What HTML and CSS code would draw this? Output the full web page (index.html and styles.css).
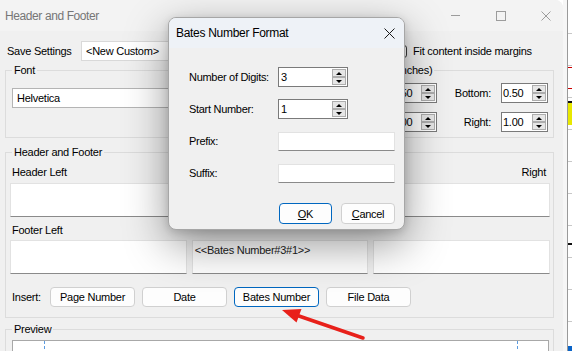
FILE: index.html
```html
<!DOCTYPE html>
<html lang="en">

<head>
    <meta charset="UTF-8">
    <title>Header and Footer</title>
    <link rel="stylesheet" href="styles.css">
</head>

<body>
    <div class="screen">
        <div class="hf-window">
            <div class="titlebar">
                <span class="title">Header and Footer</span>
                <div class="caption">
                    <svg width="10" height="10" viewBox="0 0 10 10"><path d="M0 4.5h9" stroke="#9c9c9c" fill="none"/></svg>
                    <svg width="10" height="10" viewBox="0 0 10 10"><rect x="0.5" y="0.5" width="9" height="9" stroke="#9c9c9c" fill="none"/></svg>
                    <svg width="10" height="10" viewBox="0 0 10 10"><path d="M0.5 0.5l9 9M9.5 0.5l-9 9" stroke="#9c9c9c" fill="none"/></svg>
                </div>
            </div>

            <div class="client">
                <div class="settings-row">
                    <span class="settings-label">Save Settings</span>
                    <div class="combo">&lt;New Custom&gt;</div>
                    <label class="fit-check"><span class="checkbox"></span>Fit content inside margins</label>
                </div>

                <div class="top-groups">
                    <fieldset class="group font-group">
                        <legend>Font</legend>
                        <div class="font-field">Helvetica</div>
                    </fieldset>
                    <fieldset class="group margins-group">
                        <legend>Margins (inches)</legend>
                        <div class="margins-grid">
                            <span class="m-label">Top:</span>
                            <div class="spin"><span class="val">0.50</span><span class="spinner"><b class="up"></b><b class="down"></b></span></div>
                            <span class="m-label wide">Bottom:</span>
                            <div class="spin"><span class="val">0.50</span><span class="spinner"><b class="up"></b><b class="down"></b></span></div>
                            <span class="m-label">Left:</span>
                            <div class="spin"><span class="val">1.00</span><span class="spinner"><b class="up"></b><b class="down"></b></span></div>
                            <span class="m-label wide">Right:</span>
                            <div class="spin"><span class="val">1.00</span><span class="spinner"><b class="up"></b><b class="down"></b></span></div>
                        </div>
                    </fieldset>
                </div>

                <fieldset class="group hf-group">
                    <legend>Header and Footer</legend>
                    <div class="hf-labels">
                        <span>Header Left</span>
                        <span class="center">Center</span>
                        <span class="right">Right</span>
                    </div>
                    <div class="hf-boxes">
                        <div class="hf-box"></div>
                        <div class="hf-box"></div>
                        <div class="hf-box"></div>
                    </div>
                    <div class="hf-labels footer-labels">
                        <span>Footer Left</span>
                    </div>
                    <div class="hf-boxes footer-boxes">
                        <div class="hf-box"></div>
                        <div class="hf-box">&lt;&lt;Bates Number#3#1&gt;&gt;</div>
                        <div class="hf-box"></div>
                    </div>
                    <div class="insert-row">
                        <span class="insert-label">Insert:</span>
                        <button class="btn insert-btn">Page Number</button>
                        <button class="btn insert-btn">Date</button>
                        <button class="btn insert-btn focused">Bates Number</button>
                        <button class="btn insert-btn">File Data</button>
                    </div>
                </fieldset>

                <fieldset class="group preview-group">
                    <legend>Preview</legend>
                    <div class="preview-page">
                        <div class="preview-margins"></div>
                    </div>
                </fieldset>
            </div>
        </div>

        <div class="doc-strip"></div>

        <div class="dialog">
            <div class="dialog-title">
                <span>Bates Number Format</span>
                <svg width="11" height="11" viewBox="0 0 11 11"><path d="M0.5 0.5l10 10M10.5 0.5l-10 10" stroke="#1a1a1a" fill="none"/></svg>
            </div>
            <div class="dialog-body">
                <div class="dialog-grid">
                    <span>Number of Digits:</span>
                    <div class="spin digits"><span class="val">3</span><span class="spinner"><b class="up"></b><b class="down"></b></span></div>
                    <span>Start Number:</span>
                    <div class="spin digits"><span class="val">1</span><span class="spinner"><b class="up"></b><b class="down"></b></span></div>
                    <span>Prefix:</span>
                    <div class="text-field"></div>
                    <span>Suffix:</span>
                    <div class="text-field"></div>
                </div>
                <div class="dialog-buttons">
                    <button class="btn focused ok-btn"><u>O</u>K</button>
                    <button class="btn cancel-btn"><u>C</u>ancel</button>
                </div>
            </div>
        </div>

        <svg class="arrow" width="572" height="351" viewBox="0 0 572 351">
            <path d="M363 338L296 315" stroke="#e8201a" stroke-width="3.5" stroke-linecap="round" fill="none"/>
            <path d="M282 310L301.5 309L296.5 322.5Z" fill="#e8201a"/>
        </svg>
    </div>
</body>

</html>
```
FILE: styles.css
```css
* {
    box-sizing: border-box;
}

body {
    margin: 0;
    font-family: "Liberation Sans", Arial, sans-serif;
    font-size: 11px;
    letter-spacing: -0.25px;
    color: #000;
    background: #fff;
    overflow: hidden;
}

.screen {
    position: relative;
    display: flex;
    width: 572px;
    height: 351px;
    overflow: hidden;
}

/* main window */

.hf-window {
    width: 563px;
    height: 351px;
    flex-shrink: 0;
    background: #f0f0f0;
    border-top-right-radius: 8px;
    overflow: hidden;
}

.titlebar {
    height: 31px;
    display: flex;
    align-items: center;
    justify-content: space-between;
    padding: 0 12px 0 5px;
    background: #f3f3f3;
}

.titlebar .title {
    font-size: 12px;
    letter-spacing: -0.4px;
    color: #767676;
}

.caption {
    display: flex;
    align-items: center;
    gap: 35px;
}

.caption svg {
    display: block;
}

.client {
    padding: 10px 9px 0 5px;
}

.settings-row {
    display: flex;
    align-items: center;
    height: 20px;
}

.settings-label {
    width: 76px;
    padding-left: 2px;
}

.combo {
    width: 170px;
    height: 20px;
    background: #fff;
    border: 1px solid #d9d9d9;
    padding-left: 4px;
    line-height: 18px;
}

.fit-check {
    display: flex;
    align-items: center;
    gap: 6px;
    margin-left: 143px;
}

.checkbox {
    width: 13px;
    height: 13px;
    border: 1px solid #3a3a3a;
    border-radius: 3px;
    background: #fff;
}

/* group boxes */

.group {
    margin: 0;
    min-width: 0;
    border: 1px solid #dcdcdc;
    padding: 0 5px 5px 6px;
}

.group legend {
    padding: 0 2px;
    line-height: 14px;
}

.top-groups {
    display: flex;
    gap: 6px;
    margin-top: 2px;
}

.font-group {
    flex: 1;
}

.font-field {
    margin-top: 11px;
    height: 20px;
    background: #fff;
    border: 1px solid #b4b4b4;
    padding-left: 4px;
    line-height: 18px;
}

.margins-group {
    width: 217px;
    padding-left: 5px;
}

.margins-group legend {
    margin-left: 10px;
}

.margins-grid {
    display: grid;
    grid-template-columns: 47px 47px 64px 47px;
    grid-auto-rows: 20px;
    row-gap: 9px;
    align-items: center;
    margin-top: 6px;
}

.m-label {
    text-align: right;
    padding-right: 6px;
}

.m-label.wide {
    padding-right: 10px;
}

/* spin boxes */

.spin {
    display: flex;
    height: 20px;
    background: #fff;
    border: 1px solid #7a7a7a;
}

.spin .val {
    flex: 1;
    padding-left: 1px;
    line-height: 18px;
}

.spinner {
    width: 15px;
    display: flex;
    flex-direction: column;
    padding: 1px 1px 1px 0;
}

.spinner b {
    flex: 1;
    background: #e6e6e6;
    border: 1px solid #adadad;
    display: flex;
    align-items: center;
    justify-content: center;
}

.spinner b::before {
    content: "";
    border-left: 3px solid transparent;
    border-right: 3px solid transparent;
}

.spinner .up::before {
    border-bottom: 3px solid #000;
}

.spinner .down::before {
    border-top: 3px solid #000;
}

/* header and footer */

.hf-group {
    margin-top: 7px;
    padding: 0 3px 10px 4px;
}

.hf-group legend {
    margin-left: 2px;
}

.hf-labels {
    display: grid;
    grid-template-columns: repeat(3, 1fr);
    column-gap: 5px;
    margin-top: 6px;
    line-height: 14px;
}

.hf-labels span {
    padding: 0 4px 0 2px;
}

.hf-labels .center {
    visibility: hidden;
    text-align: center;
}

.hf-labels .right {
    text-align: right;
}

.hf-boxes {
    display: grid;
    grid-template-columns: repeat(3, 1fr);
    column-gap: 5px;
    margin-top: 4px;
}

.footer-boxes {
    margin-top: 3px;
}

.hf-box {
    height: 34px;
    background: #fff;
    border: 1px solid #e2e2e2;
    border-bottom-color: #8a8a8a;
    padding: 2px 2px;
    line-height: 14px;
    color: #222;
}

.insert-row {
    display: flex;
    align-items: center;
    gap: 7px;
    margin-top: 13px;
}

.insert-label {
    width: 33px;
    padding-left: 2px;
}

.btn {
    height: 20px;
    padding: 0;
    font: inherit;
    letter-spacing: inherit;
    color: #000;
    background: #fdfdfd;
    border: 1px solid #d0d0d0;
    border-radius: 4px;
}

.btn.focused {
    border-color: #0067c0;
}

.insert-btn {
    width: 85px;
}

/* preview */

.preview-group {
    margin-top: 4px;
    padding: 0 4px 0 6px;
}

.preview-page {
    margin-top: 4px;
    height: 60px;
    background: #fff;
    border: 1px solid #a8a8a8;
}

.preview-margins {
    height: 100%;
    margin: 0 30px 0 31px;
    border-left: 1px dashed #5b9be0;
    border-right: 1px dashed #5b9be0;
}

/* document behind the window */

.doc-strip {
    flex: 1;
    height: 351px;
    background:
        linear-gradient(#c00, #c00) 5px 67px / 4px 1px no-repeat,
        linear-gradient(#c00, #c00) 5px 88px / 4px 1px no-repeat,
        linear-gradient(#111, #111) 5px 101px / 4px 2px no-repeat,
        linear-gradient(#e8e800, #e8e800) 5px 103px / 4px 22px no-repeat,
        linear-gradient(#111, #111) 5px 243px / 4px 2px no-repeat,
        linear-gradient(#0a64c8, #0a64c8) 5px 346px / 4px 5px no-repeat,
        repeating-linear-gradient(transparent 0 31px, #c8c8c8 31px 32px) 5px 2px / 4px 351px no-repeat,
        linear-gradient(to right, #f6f6f6 0 4px, #9a9a9a 4px 5px, #fff 5px);
}

/* Bates Number dialog */

.dialog {
    position: absolute;
    left: 168px;
    top: 17px;
    width: 237px;
    height: 213px;
    background: #f0f0f0;
    border: 1px solid #a6a6a6;
    border-radius: 8px;
    overflow: hidden;
    box-shadow: 0 14px 44px rgba(0, 0, 0, 0.42), 0 2px 8px rgba(0, 0, 0, 0.14);
}

.dialog-title {
    height: 30px;
    display: flex;
    align-items: center;
    justify-content: space-between;
    padding: 0 9px 0 7px;
    background: #eef2f7;
    font-size: 12px;
    letter-spacing: -0.3px;
}

.dialog-title svg {
    display: block;
}

.dialog-body {
    padding: 19px 9px 0 20px;
    letter-spacing: -0.3px;
}

.dialog-grid {
    display: grid;
    grid-template-columns: 89px 117px;
    grid-auto-rows: 20px;
    row-gap: 12px;
    align-items: center;
}

.spin.digits {
    width: 70px;
}

.spin.digits .val {
    padding-left: 2px;
}

.text-field {
    height: 19px;
    background: #fff;
    border: 1px solid #e2e2e2;
    border-bottom-color: #8a8a8a;
}

.dialog-buttons {
    display: flex;
    justify-content: flex-end;
    gap: 9px;
    margin-top: 20px;
}

.ok-btn {
    width: 53px;
    height: 21px;
}

.cancel-btn {
    width: 54px;
    height: 21px;
}

.arrow {
    position: absolute;
    left: 0;
    top: 0;
    pointer-events: none;
}
```
